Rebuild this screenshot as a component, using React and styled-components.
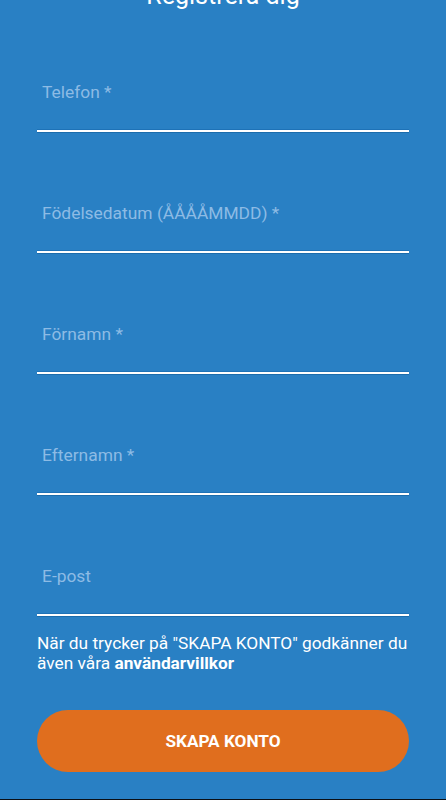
import React from "react";
import styled, { createGlobalStyle } from "styled-components";

const GlobalStyle = createGlobalStyle`
    html, body {
        margin:0;
        padding:0;
        background:#2980c4;
    }
    * {
        box-sizing:border-box;
    }
`;

const Screen = styled.div`
    display:flex;
    flex-direction:column;
    width:446px;
    height:800px;
    padding:0 37px;
    overflow:hidden;
    background:#2980c4;
    border-bottom:1px solid #0b0f14;
    font-family:Roboto, "Liberation Sans", sans-serif;
`;
const Title = styled.h1`
    margin:-18px 0 0;
    font-weight:400;
    font-size:25px;
    line-height:28px;
    color:#fff;
    text-align:center;
`;
const Form = styled.form`
    display:flex;
    flex-direction:column;
    margin-top:1px;
`;
const Field = styled.label`
    display:flex;
    flex-direction:column;
    justify-content:flex-end;
    height:121px;
`;
const FieldLabel = styled.span`
    padding:0 0 28px 5px;
    font-size:17.4px;
    line-height:19px;
    color:#8dbbe4;
`;
const FieldLine = styled.span`
    display:block;
    height:2px;
    background:#fff;
    box-shadow:0 1px 0 #1b6cac, 0 -1px 0 rgba(20,100,170,0.5);
`;
const Terms = styled.p`
    margin:17px 0 0;
    font-size:17.3px;
    line-height:20px;
    color:#fff;
    b {
        font-weight:700;
    }
`;
const SubmitButton = styled.button`
    display:flex;
    justify-content:center;
    align-items:center;
    height:62px;
    margin-top:37px;
    border:none;
    border-radius:31px;
    background:#e06e1e;
    font-family:Roboto, "Liberation Sans", sans-serif;
    font-weight:700;
    font-size:17.2px;
    color:#fff;
    cursor:pointer;
`;

const fields = [
    "Telefon *",
    "Födelsedatum (ÅÅÅÅMMDD) *",
    "Förnamn *",
    "Efternamn *",
    "E-post"
];

function App(){
    const fieldList = fields.map((item, index) => (
        <Field key={index}>
            <FieldLabel>{item}</FieldLabel>
            <FieldLine />
        </Field>
    ));

    return (
        <>
            <GlobalStyle />
            <Screen>
                <Title>Registrera dig</Title>
                <Form onSubmit={e => e.preventDefault()}>
                    {fieldList}
                </Form>
                <Terms>
                    När du trycker på "SKAPA KONTO" godkänner du även våra <b>användarvillkor</b>
                </Terms>
                <SubmitButton type="button">SKAPA KONTO</SubmitButton>
            </Screen>
        </>
    )
}

export default App;
